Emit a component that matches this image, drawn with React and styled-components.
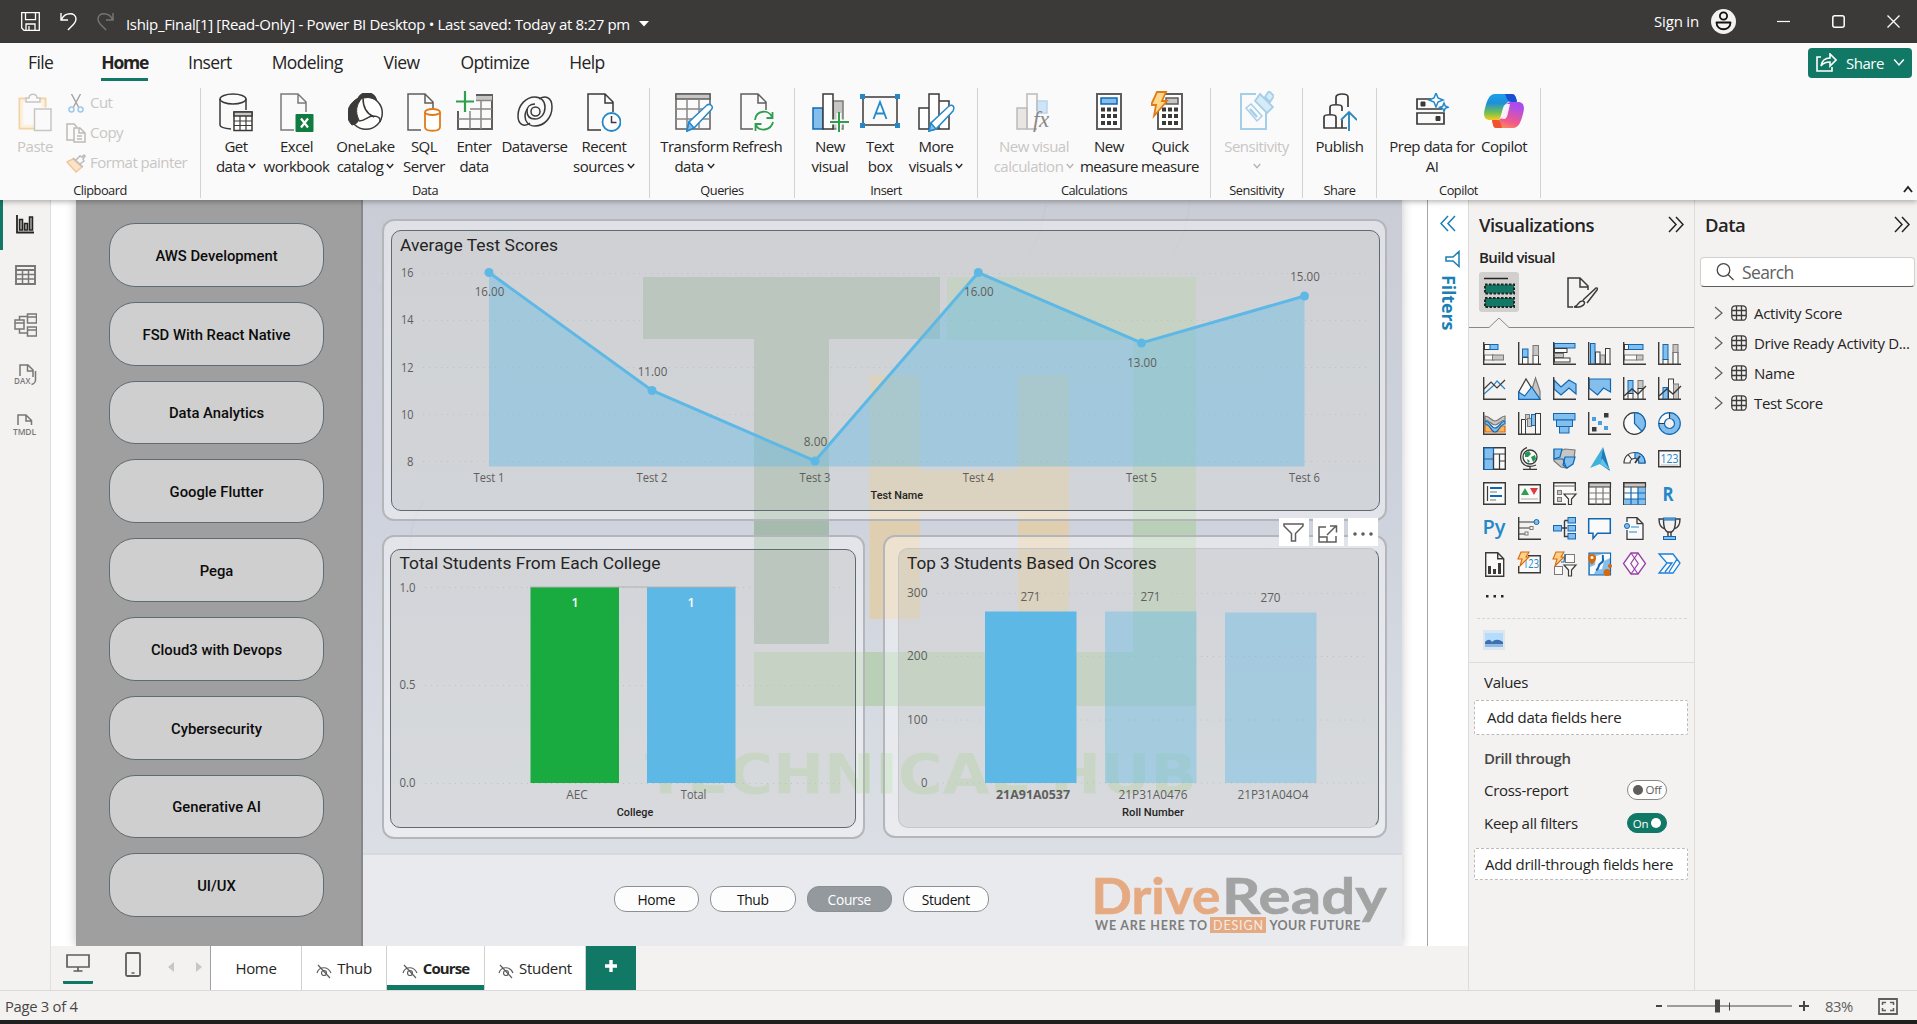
import React from "react";
import styled, { createGlobalStyle, css } from "styled-components";

const UI = '"Open Sans", "Noto Sans", sans-serif';
const DIN = 'Roboto, "Liberation Sans", sans-serif';
const GREEN = "#117865";
const INK = "#252423";
const DK = "#3b3a39";
const BS = "#1068b4";
const BF = "#83beec";
const GS = "#7a7977";
const GF = "#c8c6c4";
const CY = "#2488c8";

const Global = createGlobalStyle`
  *, *::before, *::after { box-sizing: border-box; }
  html, body { margin: 0; padding: 0; }
  body { font-family: ${UI}; color: ${INK}; overflow: hidden; }
  svg { display: block; flex: none; }
`;

const App_ = styled.div`
  width: 1917px; height: 1024px; display: flex; flex-direction: column;
  background: #f3f2f1; font-size: 15px; letter-spacing: -0.033em; overflow: hidden;
`;

/* ---------- title bar ---------- */
const TitleBar = styled.header`
  height: 43px; flex: none; background: ${DK}; color: #fff;
  display: flex; align-items: center; padding: 0 17px 0 21px;
`;
const QuickAccess = styled.div`display: flex; gap: 20px; margin-right: 12px;`;
const DocTitle = styled.div`
  padding-top: 5px; display: flex; align-items: center; gap: 9px; white-space: nowrap;
  letter-spacing: -0.0215em;
`;
const Spacer = styled.div`flex: 1;`;
const SignIn = styled.div`
  display: flex; align-items: center; gap: 12px; margin-right: 41px; letter-spacing: -0.012em;
  span { position: relative; top: -1px; }
`;
const WindowButtons = styled.div`display: flex; align-items: center; gap: 42px;`;

/* ---------- ribbon ---------- */
const Ribbon = styled.section`
  height: 157px; flex: none; background: #fafafa; position: relative; z-index: 2;
  box-shadow: 0 2px 5px rgba(0,0,0,.28); display: flex; flex-direction: column;
`;
const MenuRow = styled.nav`height: 42px; display: flex; align-items: stretch; padding: 0 5px 0 8px;`;
const MenuTab = styled.div`
  padding: 0 20px; margin-right: ${(p) => p.$gap || 0}px; font-size: 17.5px; line-height: 38px;
  font-weight: ${(p) => (p.$active ? 700 : 400)}; position: relative;
  letter-spacing: ${(p) => (p.$active ? "-0.07em" : "-0.035em")};
  ${(p) => p.$active && css`&::after { content: ""; position: absolute; left: 20px; right: 20px; bottom: 4px; height: 3px; background: ${GREEN}; }`}
`;
const ShareButton = styled.button`
  align-self: flex-start; margin-top: 5px; width: 104px; height: 30px; border: 0; border-radius: 4px;
  background: ${GREEN}; color: #fff; font: 15px ${UI}; letter-spacing: -0.033em;
  display: flex; align-items: center; padding: 0 10px 1px 8px; gap: 9px;
`;
const Groups = styled.div`display: flex; padding-top: 3px; height: 113px; position: relative;`;
const Group = styled.div`
  width: ${(p) => p.$w}px; height: 110px; border-right: 1px solid #d4d2d0;
  display: flex; flex-direction: column; padding-left: ${(p) => p.$pl || 0}px;
`;
const GroupItems = styled.div`display: flex; height: 94px;`;
const GroupLabel = styled.div`
  font-size: 12.8px; line-height: 16px; text-align: center; margin-left: -${(p) => p.$pl || 0}px; padding-top: 3px;
`;
const BigButton = styled.div`
  width: ${(p) => p.$w}px; display: flex; flex-direction: column; align-items: center; white-space: nowrap;
  padding-top: 5px; color: ${(p) => (p.$off ? "#c8c6c4" : INK)};
`;
const IconBox = styled.div`height: 43px; display: flex; justify-content: center; align-items: flex-start;`;
const Line = styled.div`line-height: 20px; height: 20px; display: flex; align-items: center; gap: 3px;`;
const ClipList = styled.div`display: flex; flex-direction: column; padding-left: 4px; letter-spacing: -0.036em;`;
const ClipRow = styled.div`height: 30px; display: flex; align-items: center; gap: 4px; color: #c8c6c4; white-space: nowrap;
  svg { width: 20px; } span { position: relative; top: -1px; }`;
const CollapseMark = styled.div`margin-left: auto; align-self: flex-end; padding: 0 4px 5px 0;`;

const Chev = ({ c = INK, w = 8, s = 1.4 }) => (
  <svg width={w} height={w * 0.75} viewBox="0 0 8 6" fill="none" stroke={c} strokeWidth={s}><path d="M.8 1l3.2 3.6L7.2 1" /></svg>
);

function RibbonItem({ w, icon, a, b, caret, off }) {
  return (
    <BigButton $w={w} $off={off}>
      <IconBox>{icon}</IconBox>
      <Line>{a}</Line>
      {(b || caret) && <Line>{b}{caret && <Chev c={off ? "#b5b3b1" : INK} />}</Line>}
    </BigButton>
  );
}

const Ico = ({ w, h, children, ...r }) => (
  <svg width={w} height={h} viewBox={`0 0 ${w} ${h}`} fill="none" stroke={DK} strokeWidth="1.5" {...r}>{children}</svg>
);
const docPath = "M14 37H1V1h17l8 8v10M18 1v9h8";

const ribbonIcons = {
  paste: (
    <Ico w={34} h={39} stroke="#c8c6c4">
      <path d="M8 5.500H1.500v30H16M22 5.500h5.500v9" stroke="#f3d3a6" strokeWidth="2" /><path d="M8 8H4v25h12M22 8h3v6" stroke="#fdf0dc" strokeWidth="2.500" />
      <path d="M8 9V5h3c0-5 8-5 8 0h3v4z" fill="#fafafa" /><path d="M16.500 16h16.500v21.500H16.500z" fill="#fafafa" />
    </Ico>
  ),
  getData: (
    <Ico w={34} h={39}>
      <path d="M1 6v26c0 2 5 3.500 11 4M27 6v11" /><ellipse cx="14" cy="6" rx="13" ry="5" />
      <path d="M15 19h18v18.500H15z" fill="#fff" /><path d="M15 19h18v4H15z" fill={GF} /><path d="M15 28h18M15 32.500h18M21 23v14M27 23v14" strokeWidth="1.2" />
    </Ico>
  ),
  excel: (
    <Ico w={34} h={39} stroke={GS}>
      <path d={docPath} /><rect x="15.500" y="21" width="18" height="18" rx="1" fill="#107c41" stroke="none" />
      <path d="M21 25.500l7 9M28 25.500l-7 9" stroke="#fff" strokeWidth="2.2" />
    </Ico>
  ),
  onelake: (
    <Ico w={36} h={38}>
      <circle cx="18" cy="20" r="16.300" fill="#fff" />
      <path d="M10 6C13-2 25-2 28 6 22 3 16 4 10 6z" fill={DK} />
      <path d="M11 5C-1 10-4 24 4 32c4-1 6-3 7-5-4-8-3-15 3-22z" fill={DK} strokeWidth="1" />
      <path d="M15 5c0 9 4 16 11 19M11 28c6 0 9-5 14-5 5 0 8 2 7 6" />
    </Ico>
  ),
  sql: (
    <Ico w={34} h={39} stroke="#605e5c">
      <path d={docPath} /><g stroke="#e07b1a" strokeWidth="1.800" fill="#fff"><path d="M18 19v15c0 5 15 5 15 0V19" /><ellipse cx="25.500" cy="19" rx="7.500" ry="3" /></g>
    </Ico>
  ),
  enter: (
    <Ico w={37} h={41} stroke="#605e5c" style={{ marginTop: -2 }}>
      <path d="M20 4h16v34H2V20" strokeWidth="2" /><path d="M20 5h16v4H20z" fill={GF} stroke="none" />
      <path d="M20 9.500h16M14 18h22M2 28h34M14 20v18M25 9v29" stroke="#8a8886" /><path d="M9 0v21M0 10.500h18" stroke="#2f9e4f" strokeWidth="2.200" />
    </Ico>
  ),
  dataverse: (
    <Ico w={36} h={37} strokeWidth="1.500">
      <path d="M13 30C7 35 1 31 1 23 1 12 9 4 18 4c6 0 10 4 10 10 0 7-4 12-10 12-5 0-8-3-8-8 0-4 3-7 8-7" />
      <path d="M22 6c6-4 13-2 13 8 0 11-8 19-17 19-7 0-10-5-10-10 0-3 1-5 2-7" />
      <circle cx="18.500" cy="18.500" r="4.500" />
    </Ico>
  ),
  recent: (
    <Ico w={34} h={39}>
      <path d={docPath} /><circle cx="24.500" cy="29" r="9" fill="#fff" stroke="#2488c8" strokeWidth="1.800" /><path d="M24.500 23v6.500h5" />
    </Ico>
  ),
  transform: (
    <Ico w={39} h={39} stroke="#605e5c">
      <path d="M1 1h34v35H1z" fill="#fafafa" /><path d="M1 1h34v5H1z" fill={GF} /><path d="M1 16h34M1 26h34M12 6v30M24 6v30" stroke="#8a8886" />
      <path d="M12 38l2-9 18-17c4-2 7 2 4 5L19 35z" fill="#fff" stroke="#2488c8" /><path d="M12 38l2-9 5 6z" fill={BF} stroke="#2488c8" />
    </Ico>
  ),
  refresh: (
    <Ico w={34} h={39} stroke="#605e5c">
      <path d="M13 36H1V1h17l8 8v8M18 1v9h8" />
      <g stroke="#2f9e4f" strokeWidth="1.800"><path d="M15 27c1-10 14-11 17-3M32.500 19v6h-6M33 29c-2 9-14 10-17 3M15.500 38v-7h6" /></g>
    </Ico>
  ),
  newVisual: (
    <Ico w={37} h={39}>
      <path d="M1 15h10v21H1z" fill={BF} stroke={BS} /><path d="M21 8h10v28H21z" fill={GF} stroke={GS} /><path d="M11 1h10v35H11z" fill="#fff" />
      <path d="M27 20v19M18 29h19" stroke="#fafafa" strokeWidth="5" /><path d="M27 19v20M18 29h19" stroke="#2f9e4f" strokeWidth="2" />
    </Ico>
  ),
  textBox: (
    <Ico w={40} h={36}>
      <path d="M3 4h34v28H3z" /><g fill="#2488c8" stroke="none"><path d="M0 1h5v5H0zM35 1h5v5h-5zM0 30h5v5H0zM35 30h5v5h-5z" /></g>
      <path d="M13.500 26L20 9l6.500 17M15.500 20.500h9" stroke="#2488c8" strokeWidth="1.800" />
    </Ico>
  ),
  moreVisuals: (
    <Ico w={37} h={39}>
      <path d="M1 15h10v21H1zM21 8h10v28H21zM11 1h10v35H11z" fill="#fff" />
      <path d="M11 38l2-8 18-17c4-2 6 1 4 5L18 36z" fill="#fff" stroke="#2488c8" /><path d="M11 38l2-8 5 6z" fill={BF} stroke="#2488c8" />
    </Ico>
  ),
  calc: (
    <Ico w={36} h={39} stroke="#bdbbb9">
      <path d="M1 15h10v21H1z" fill="#e8e6e4" /><path d="M21 8h10v12H21z" fill="#cfe4f6" stroke="#b8d6ee" /><path d="M21 36H11V1h10v17" />
      <text x="17" y="34" fontFamily="Liberation Serif, serif" fontStyle="italic" fontSize="23" fill="#8a8886" stroke="none">fx</text>
    </Ico>
  ),
  measure: (
    <Ico w={26} h={37} stroke="#605e5c">
      <path d="M1 1h24v35H1z" strokeWidth="2" fill="#fff" /><path d="M5 5h16v6H5z" fill={BF} stroke={BS} />
      <path d="M5 16.500h16M5 23h16M5 30h16" stroke={DK} strokeWidth="4" strokeDasharray="4 2" />
    </Ico>
  ),
  quick: (
    <Ico w={32} h={39} stroke="#605e5c" viewBox="0 -2 32 39" style={{ marginTop: -2, marginRight: 6 }}>
      <path d="M7 1h24v35H7z" strokeWidth="2" fill="#fff" /><path d="M15 5h12v6H15z" fill={GF} />
      <path d="M11 16.500h16M11 23h16M11 30h16" stroke={DK} strokeWidth="4" strokeDasharray="4 2" />
      <path d="M6-1h9l-4 9h5L3 23l2-11H0z" fill="#ffd98a" stroke="#e07b1a" strokeWidth="1.800" />
    </Ico>
  ),
  sensitivity: (
    <Ico w={34} h={39} stroke="#a5cfe9" style={{ marginTop: -2 }} viewBox="0 -2 34 39">
      <path d="M16 1H1v35h25V18" strokeWidth="2" /><path d="M6 15l5-4 11 12-5 5z" /><path d="M10 16l7 8" strokeWidth="2.500" />
      <path d="M15 8l5-7 13 13-6 6zM25 4l4-6 5 5-4 6z" fill="#d6ebf7" strokeWidth="1.800" />
    </Ico>
  ),
  publish: (
    <Ico w={34} h={39} strokeWidth="1.7">
      <path d="M1 24c0-3 12-3 12 0v11H1zM7 21v-7c0-3 12-3 12 0v4M13 11V4c0-4 12-4 12 0v10M1 35h23M19 27v8" strokeLinejoin="round" />
      <path d="M26 38V20M18 27l8-8 8 8" stroke="#2c87ba" strokeWidth="1.900" />
    </Ico>
  ),
  prep: (
    <Ico w={33} h={36} strokeWidth="1.700">
      <path d="M15 6H1v10h25M1 20h27v11H1z" /><path d="M5 9h4v4H5zM20 23.500h4v4h-4z" fill={DK} strokeWidth="1" />
      <g stroke="#2488c8" strokeWidth="1.500" fill="#fafafa"><path d="M20 0l2 5 5 2-5 2-2 5-2-5-5-2 5-2zM28 10l1.200 3 3 1.200-3 1.200L28 18.500l-1.200-3-3-1.200 3-1.200z" /></g>
    </Ico>
  ),
  copilot: (
    <svg width="40" height="36" viewBox="0 0 40 36">
      <defs>
        <linearGradient id="cpA" x1="0" y1="0" x2="0" y2="1"><stop offset="0" stopColor="#1aa0ee" /><stop offset=".35" stopColor="#1f8fd8" /><stop offset=".7" stopColor="#6cbf57" /><stop offset="1" stopColor="#f6cb1c" /></linearGradient>
        <linearGradient id="cpB" x1="0" y1="1" x2=".4" y2="0"><stop offset="0" stopColor="#fda04a" /><stop offset=".4" stopColor="#f2598a" /><stop offset="1" stopColor="#a94df0" /></linearGradient>
      </defs>
      <path d="M19 1h9c3 0 4 3 5 7h-6c-5 0-6 5-8 12-2 5-3 7-7 7H6c-6 0-7-5-5-12S5 1 11 1z" fill="url(#cpA)" />
      <path d="M21 1h7c3 0 4 3 5 8h-6c-3 0-4-3-6-8z" fill="#1b4fd0" />
      <path d="M20 35h-8c-3 0-3-4-4-8h5c4 0 5-3 7-10s4-8 8-8h6c6 0 7 5 5 12s-4 14-10 14z" fill="url(#cpB)" />
      <path d="M18 35h-6c-3 0-3-4-4-8h5c3 0 4 3 5 8z" fill="#f0542f" />
      <path d="M23 11c-2 0-3 1-4 4l-3 11c2-1 3 0 4 0 2 0 3-2 4-6l2-9z" fill="#fff" opacity=".9" />
    </svg>
  ),
};

/* ---------- workspace ---------- */
const Workspace = styled.main`flex: 1; min-height: 0; display: flex;`;
const Rail = styled.aside`
  width: 51px; border-right: 1px solid #e1dfdd; display: flex; flex-direction: column;
`;
const RailItem = styled.div`
  height: 50px; display: flex; align-items: center; justify-content: center;
  border-left: 3px solid ${(p) => (p.$active ? GREEN : "transparent")}; padding: 0 3px 1px 0;
`;
const Center = styled.div`width: 1417px; display: flex; flex-direction: column;`;
const Stage = styled.div`height: 746px; display: flex; background: #fff; overflow: hidden;`;
const CanvasArea = styled.div`width: 1377px; padding: 0 25px; border-right: 1px solid #a8a6a4;`;
const FiltersPane = styled.aside`
  width: 40px; display: flex; flex-direction: column; align-items: center; color: #1a7fb5; padding-top: 15px; background: #fff;
`;
const FiltersLabel = styled.div`
  writing-mode: vertical-rl; font-size: 18px; font-weight: 700; letter-spacing: -0.01em; margin: 7px 0 0 2px; line-height: 20px;
`;
const Page = styled.div`
  width: 1326px; height: 746px; display: flex; position: relative; box-shadow: 0 0 10px rgba(0,0,0,.24);
  background: linear-gradient(#cacdd6, #ced2dc 40%, #dbdfe5 88%);
`;
const Sidebar = styled.div`
  width: 287px; background: #9f9fa0; border-right: 2px solid #88888a; padding: 23px 0 0 33px;
  display: flex; flex-direction: column; gap: 15px; position: relative;
`;
const CoursePill = styled.div`
  width: 215px; height: 63.800px; border: 1px solid #5f6c73; border-radius: 26px; background: #cfcfcf;
  display: flex; align-items: center; justify-content: center; padding-top: 2px;
  font: 500 14.8px ${DIN}; letter-spacing: 0; color: #0c0c0c;
`;
const Body = styled.div`flex: 1; display: flex; flex-direction: column; position: relative;`;
const Watermark = styled.svg`position: absolute; left: -2px; top: 0;`;
const Cards = styled.div`
  height: 655px; padding: 19px 15px 0 19px; display: grid; position: relative;
  grid-template-columns: 483px 504px; grid-template-rows: 302px 304px; gap: 14px 18px; border-bottom: 2px solid #d6d9de;
`;
const Card = styled.section`
  grid-column: ${(p) => (p.$wide ? "1 / 3" : "auto")}; border: 2px solid #b5b6ba; border-radius: 12px; margin-bottom: ${(p) => p.$mb || 0}px;
  background: rgba(255,255,255,.4); padding: ${(p) => p.$pad}; position: relative;
`;
const ChartPanel = styled.div`
  height: 100%; border: 1px solid ${(p) => (p.$soft ? "#c4c6c9" : "#5f6b70")}; border-right-color: #5f6b70;
  border-radius: 10px; background: rgba(20,10,0,.075); overflow: hidden;
`;
const VisualHeader = styled.div`position: absolute; top: -19px; right: 7px; display: flex; gap: 4px;`;
const HeaderButton = styled.div`
  width: 30.500px; height: 28px; background: #fff; display: flex; align-items: center; justify-content: center;
`;
const PageFooter = styled.div`
  flex: 1; background: #e9eaee; display: flex; position: relative; padding: 31px 0 0 250.500px; gap: 11px;
`;
const NavPill = styled.div`
  width: 85.500px; height: 26px; border: 1px solid #8b9094; border-radius: 12px; background: ${(p) => (p.$active ? "#94999e" : "#fdfdfd")};
  color: ${(p) => (p.$active ? "#fff" : "#111")}; font-size: 13.800px; line-height: 26px; text-align: center; letter-spacing: -0.025em;
`;
const LogoSlot = styled.div`margin: -14px 0 0 94px;`;

const T = ({ x, y, w, s = 12.5, a = "middle", f = "#605e5c", b, din, children }) => (
  <text x={x} y={y} fontSize={s} textAnchor={a} fill={f} fontWeight={b || 400} fontFamily={din ? DIN : UI} letterSpacing="0"
    textLength={w} lengthAdjust="spacingAndGlyphs">{children}</text>
);
const Grid = ({ ys, x1, x2 }) => ys.map((y) => (
  <line key={y} x1={x1} x2={x2} y1={y} y2={y} stroke="#bfc0c2" strokeWidth="1" strokeDasharray="1 5" />
));

const scores = [
  ["Test 1", 489, 272.5, "16.00", 296.2], ["Test 2", 652, 390.5, "11.00", 376.2], ["Test 3", 815, 461, "8.00", 446],
  ["Test 4", 978.3, 272.5, "16.00", 296.2], ["Test 5", 1141.5, 343, "13.00", 367], ["Test 6", 1304.5, 296, "15.00", 281],
];
function ScoreChart() {
  const line = scores.map((d) => `${d[1]},${d[2]}`).join(" ");
  return (
    <svg width="987" height="279" viewBox="392 231 987 279">
      <Grid ys={[273.5, 320.5, 367.5, 414.5, 461.5]} x1={423} x2={1369} />
      <T x={400} y={251} s={17} w={158} a="start" f={INK} din>Average Test Scores</T>
      {[16, 14, 12, 10, 8].map((v, i) => <T key={v} x={413.5} y={277.2 + i * 47.2} w={v > 9 ? 12.500 : 6.500} a="end">{v}</T>)}
      <polygon points={`489,466.5 ${line} 1304.5,466.5`} fill="#5db8e5" opacity=".4" />
      <polyline points={line} fill="none" stroke="#5db8e5" strokeWidth="3" />
      {scores.map((d) => (
        <g key={d[0]}>
          <circle cx={d[1]} cy={d[2]} r="4.500" fill="#5db8e5" />
          <T x={d[1] + 0.5} y={d[4]} w={d[3].length * 5.9}>{d[3]}</T>
          <T x={d[1]} y={482} w={31}>{d[0]}</T>
        </g>
      ))}
      <T x={896.8} y={498.8} w={52.5} s={11} f={INK} b={500} din>Test Name</T>
    </svg>
  );
}
function CollegeChart() {
  return (
    <svg width="463" height="277" viewBox="391 550 463 277">
      <Grid ys={[587.5, 685.5, 783.5]} x1={425} x2={843} />
      <T x={399.5} y={568.8} s={17} w={261} a="start" f={INK} din>Total Students From Each College</T>
      {["1.0", "0.5", "0.0"].map((v, i) => <T key={v} x={415.5} y={592 + i * 97.4} w={16} a="end">{v}</T>)}
      <rect x="530.500" y="587" width="88.500" height="196" fill="#1aab40" />
      <rect x="647" y="587" width="88.500" height="196" fill="#5db8e5" />
      <path d="M530 587h206" stroke="#b0b2b0" />
      <T x={575} y={607} f="#fff" b={600}>1</T><T x={691} y={607} f="#fff" b={600}>1</T>
      <T x={577} y={799} w={21.5}>AEC</T><T x={693.6} y={799} w={25.5}>Total</T>
      <T x={635} y={816} w={36.5} s={11} f={INK} b={500} din>College</T>
    </svg>
  );
}
const students = [["21A91A0537", 985, 611.5, 271, 74, true], ["21P31A0476", 1105, 611.5, 271, 69], ["21P31A04O4", 1225, 612.5, 270, 71]];
function StudentChart() {
  return (
    <svg width="480" height="277" viewBox="899 549 480 277">
      <Grid ys={[593.5, 656.5, 720, 783]} x1={937} x2={1369} />
      <T x={907} y={568.8} s={17} w={249.5} a="start" f={INK} din>Top 3 Students Based On Scores</T>
      {[300, 200, 100, 0].map((v, i) => <T key={v} x={927.5} y={597 + i * 63.3} w={v ? 20.500 : 6.500} a="end">{v}</T>)}
      {students.map(([n, x, y, v, w, on]) => (
        <g key={n}>
          <rect x={x} y={y} width="91.500" height={783 - y} fill="#5db8e5" opacity={on ? 1 : 0.4} />
          <T x={x + 45.5} y={y - 10.500} w={20}>{v}</T>
          <T x={x + 48} y={799} w={w} b={on ? 700 : 400}>{n}</T>
        </g>
      ))}
      <T x={1153} y={816} w={62} s={11} f={INK} b={500} din>Roll Number</T>
    </svg>
  );
}
function HubMark() {
  return (
    <Watermark width="1040" height="746" viewBox="361 200 1040 746">
      <g stroke="#b9bfcc" fill="none" opacity=".22" strokeWidth="2">
        <path d="M1190 200c-2 20-8 40-16 52M1046 205c-4 20-10 40-18 52M410 550c0-22 5-34 14-48M380 290c12-30 4-60 2-70" />
      </g>
      <path d="M643 277h297v62H829v305h-75V339H643z" fill="#a5bbae" />
      <path d="M947 277h249v429H754v-54h379V340H947z" fill="#b9d0b7" />
      <path d="M869.500 375H920v96h98v-96h51v244h-51V513h-98v106h-50.500z" fill="#dfcfb0" />
      <text x="645" y="793" fontFamily="DejaVu Sans, sans-serif" fontWeight="700" fontSize="55" fill="#c0d7bb" letterSpacing="0" textLength="552" lengthAdjust="spacingAndGlyphs">TECHNICAL HUB</text>
    </Watermark>
  );
}
function DriveReady() {
  return (
    <svg width="295" height="64" viewBox="1094 872 295 64" fontFamily="Lato, sans-serif" letterSpacing="0" style={{ overflow: "visible" }}>
      <g fontWeight="700" fontSize="50.500" strokeWidth=".6">
        <text x="1091.500" y="914" fill="#e6aa82" stroke="#e6aa82" textLength="129" lengthAdjust="spacingAndGlyphs">Drive</text>
        <text x="1222" y="914" fill="#a3a3a3" stroke="#a3a3a3" textLength="165" lengthAdjust="spacingAndGlyphs">Ready</text>
      </g>
      <rect x="1210" y="917" width="56" height="16" fill="#e6aa82" />
      <g fontWeight="700" fontSize="12.500" fill="#7d7d7d">
        <text x="1095" y="929.500" textLength="112">WE ARE HERE TO</text>
        <text x="1213" y="929.500" fill="#f4ece6" fontWeight="400" textLength="50">DESIGN</text>
        <text x="1269.500" y="929.500" textLength="91">YOUR FUTURE</text>
      </g>
    </svg>
  );
}

/* ---------- page tabs ---------- */
const TabBar = styled.div`flex: 1; display: flex; align-items: stretch;`;
const ViewIcons = styled.div`width: 160px; display: flex; position: relative; padding-left: 12px; border-right: 1px solid #a19f9d;`;
const DesktopView = styled.div`
  width: 30px; height: 38px; border-bottom: 3px solid ${GREEN}; display: flex; justify-content: center; padding-top: 8px; border-radius: 1px;
`;
const PhoneView = styled.div`padding: 6px 0 0 32px;`;
const Arrows = styled.div`display: flex; gap: 22px; padding: 16px 0 0 27px;`;
const PageTab = styled.div`
  width: ${(p) => p.$w}px; background: #fff; border-right: 1px solid #d2d0ce; display: flex; align-items: center; justify-content: center;
  gap: 5px; padding-bottom: 1px; letter-spacing: ${(p) => (p.$active ? "-0.06em" : "-0.02em")}; font-weight: ${(p) => (p.$active ? 700 : 400)};
  box-shadow: ${(p) => (p.$active ? `inset 0 -5px ${GREEN}` : "none")};
`;
const AddTab = styled.div`width: 50px; background: ${GREEN}; display: flex; align-items: center; justify-content: center; padding-bottom: 4px;`;
const HiddenIcon = () => (
  <Ico w={16} h={15} stroke="#605e5c" strokeWidth="1.2" style={{ marginTop: 8 }}>
    <path d="M1 9c2-7 11-7 14 0M2 1l12 13" /><circle cx="8" cy="9" r="2.500" />
  </Ico>
);

/* ---------- panes ---------- */
const Pane = styled.aside`
  width: ${(p) => p.$w}px; border-left: 1px solid #dedcda; display: flex; flex-direction: column; letter-spacing: -0.02em;
`;
const PaneHead = styled.div`
  height: 47px; flex: none; display: flex; align-items: center; justify-content: space-between; padding: 2px ${(p) => p.$pr}px 0 ${(p) => p.$pl}px;
  font-size: 18.500px; font-weight: 600; letter-spacing: -0.03em;
`;
const SubHead = styled.div`height: 25px; line-height: 20px; padding-left: 10px; font-weight: 600; letter-spacing: -0.04em;`;
const ModeRow = styled.div`display: flex; gap: 43px; padding-left: 10px; height: 40px;`;
const ModeTile = styled.div`
  width: 40px; height: 40px; border-radius: 3px; background: ${(p) => (p.$on ? "#d2d0ce" : "transparent")};
  display: flex; align-items: center; justify-content: center;
`;
const VizGrid = styled.div`
  display: grid; grid-template-columns: repeat(6, 23px); grid-auto-rows: 23px; gap: 12px; padding: 14px 0 0 14px; height: 259px;
`;
const MoreDots = styled.div`height: 17px; padding: 8px 0 0 17px;`;
const DashRule = styled.div`margin: 14px 7px 0 8px; border-top: 1px dashed #d8d6d4; height: 44px; padding: 11px 0 0 6px;`;
const Values = styled.div`border-top: 1px solid #dedcda; padding: 0 6px 0 5px; display: flex; flex-direction: column;`;
const FieldLabel = styled.div`height: ${(p) => p.$h}px; display: flex; align-items: center; padding: 0 20px 0 10px; justify-content: space-between; ${(p) => p.$b && "font-weight:600;color:#484644;letter-spacing:-.03em;"}`;
const DropBox = styled.div`
  height: ${(p) => p.$h}px; background: #fff; border: 1px dashed #bdbbb9; border-radius: 2px; display: flex; align-items: center;
  padding: 0 0 1px ${(p) => p.$pl}px; white-space: nowrap;
`;
const Toggle = styled.div`
  width: 40px; height: 20px; border-radius: 10px; border: 1px solid ${(p) => (p.$on ? GREEN : "#8a8886")}; background: ${(p) => (p.$on ? GREEN : "#fff")};
  color: ${(p) => (p.$on ? "#fff" : "#605e5c")}; font-size: 11.500px; display: flex; align-items: center; justify-content: center; gap: 3px;
  flex-direction: ${(p) => (p.$on ? "row" : "row-reverse")}; margin-right: 1px;
  &::after { content: ""; width: 10px; height: 10px; border-radius: 50%; background: ${(p) => (p.$on ? "#fff" : "#605e5c")}; }
`;
const SearchBox = styled.div`
  margin: 10px 2px 0 5px; height: 30px; background: #fff; border: 1px solid #d2d0ce; border-bottom-color: #605e5c; border-radius: 4px;
  display: flex; align-items: center; gap: 8px; padding-left: 15px; font-size: 17.500px; color: #616161; letter-spacing: -0.035em;
  span { line-height: 28px; }
`;
const Tree = styled.div`padding: 11px 0 0 19px;`;
const TreeRow = styled.div`height: 30px; display: flex; align-items: center; font-size: 15px; letter-spacing: -0.022em; white-space: nowrap; gap: 7px;`;
const DblChev = ({ c = INK, left }) => (
  <svg width="16" height="17" viewBox="0 0 16 17" fill="none" stroke={c} strokeWidth="1.500">
    <path d={left ? "M8 1L1 8.500 8 16M15 1L8 8.500 15 16" : "M1 1l7 7.500L1 16M8 1l7 7.500L8 16"} />
  </svg>
);

/* visual gallery glyphs on a 23px box */
const R = (x, y, w, h, k) => {
  const c = { b: [BF, BS], g: [GF, GS], w: ["#fafafa", DK], l: ["#fafafa", GS], o: ["#f9b36b", "#d66a0b"] }[k];
  return <rect key={`${x}-${y}-${k}`} x={x + 0.5} y={y + 0.5} width={w} height={h} fill={c[0]} stroke={c[1]} />;
};
const axis = <path key="ax" d="M.7 0v22.300H23" fill="none" stroke={DK} strokeWidth="1.400" />;
const P = (d, s = DK, f = "none", w = 1.2) => <path key={d} d={d} stroke={s} fill={f} strokeWidth={w} />;
const frame = P("M.7.700h21.600v21.600H.7z", DK, "#fafafa", 1.4);
const txt = (s, x, y, size, b = 400, w) => (
  <text key={s} x={x} y={y} fontFamily={UI} fontSize={size} fontWeight={b} fill={CY} stroke="none" letterSpacing="0" textLength={w} lengthAdjust="spacingAndGlyphs">{s}</text>
);
const bolt = P("M3 0h8L8 5h3L2 14l2-7H0z", "#d66a0b", "#ffd08a", 1.1);
const filt = P("M11 12h12l-4.500 5v5.500h-3V17z", DK, "#fafafa", 1.2);

const gallery = [
  [R(1, 2, 6, 5, "w"), R(6.5, 2, 8, 5, "b"), R(1, 12.5, 9, 5, "l"), R(9, 12.5, 11, 5, "g"), axis],
  [R(4, 15, 5.5, 7, "w"), R(4, 6.5, 5.5, 8, "b"), R(14.5, 13, 5.5, 9, "w"), R(14.5, 3, 5.5, 10, "g"), axis],
  [R(1, 1, 20.5, 4.5, "b"), R(1, 6, 12.5, 4, "w"), R(1, 11, 9, 4, "g"), R(1, 15.5, 15.5, 4, "w"), axis],
  [R(2, 1, 4.5, 21, "b"), R(7, 9.5, 4.5, 12, "w"), R(12, 12.5, 4.5, 9.5, "g"), R(17, 6, 4.5, 16, "w"), axis],
  [R(1, 2, 4, 5, "w"), R(5, 2, 14.5, 5, "b"), R(1, 12.5, 12, 5, "l"), R(13, 12.5, 6.5, 5, "g"), axis],
  [R(4.5, 17, 5, 5, "w"), R(4.5, 2, 5, 15, "b"), R(14.5, 10, 5, 12, "w"), R(14.5, 2, 5, 8, "g"), axis],
  [P("M1 17l9-8 4-5 8 8", CY), P("M1 12l7-7 6 6 8-8", DK), axis],
  [P("M11 22l6.500-21L22 14v8z", GS, GF), P("M.7 22V15L8 2l8 13v7z", DK, "#fafafa"), P("M.7 22.300V15l6 4 7-9 8.500 12.300z", BS, BF)],
  [P("M1 3l7 7 8-7 7 4v10l-7-6-8 7-7-6z", BS, BF), axis],
  [P("M1 2h21.500v13l-7-4-6 7L1 11z", BS, BF), axis],
  [R(4.5, 3, 5, 13, "b"), R(4.5, 16, 5, 6, "w"), R(14.5, 3, 5, 8, "g"), R(14.5, 11, 5, 11, "w"), P("M1 19l8-7 6 5 8-8", DK, "none", 1.4), axis],
  [R(4.5, 10, 5, 12, "b"), R(10, 1.5, 5, 20.500, "w"), R(15, 6.5, 5, 15.500, "g"), P("M1 19l8-7 6 5 8-8", DK, "none", 1.4), axis],
  [P("M2 13h5l5 5 4-4h6v6H2z", "#d66a0b", "#ffb45c"), P("M2 4c5 0 6 5 10 5s6-5 10-5v4c-5 0-6 5-10 5S7 8 2 8z", GS, GF), P("M2 9c5 0 6 7 10 7s6-7 10-7v3c-5 0-6 8-10 8S7 12 2 12z", BS, BF), axis],
  [R(3, 7, 4, 15, "w"), R(7, 2, 4, 5, "g"), R(9, 6, 4, 8, "g"), R(13, 2, 4, 11, "b"), R(17, 1, 5, 21, "w"), axis],
  [R(0, 1, 21.500, 6.500, "b"), R(3, 7.500, 16, 6.500, "b"), R(6, 14, 9.500, 6.500, "b")],
  [axis, <g key="s" stroke="none"><path d="M16 1h4.500v4.500H16zM4 15h4.500v4.500H4z" fill={DK} /><path d="M4 5h4v4H4zM10 9h4v4h-4zM16 14h4v4h-4z" fill="#4a9fe0" /></g>],
  [<circle key="c" cx="11.500" cy="11.500" r="10.800" fill="#fafafa" stroke={DK} strokeWidth="1.300" />, P("M11.500.700a10.800 10.800 0 0 1 7.500 18.600l-7.500-7.800z", BS, BF)],
  [<circle key="c" cx="11.500" cy="11.500" r="8" fill="none" stroke={BF} strokeWidth="5.500" />, P("M11.500 3.500a8 8 0 0 0-8 8", "#fafafa", "none", 5.5), <g key="g" fill="none" stroke={BS} strokeWidth="1.200"><circle cx="11.500" cy="11.500" r="10.800" /><circle cx="11.500" cy="11.500" r="5" /></g>, P("M.7 11.500h5.800M11.500.700v5.500", DK)],
  [frame, P("M1 1h9.500v21.500H1zM1 12h9.500", BS, BF), P("M10.500 7h12M10.500 7v15.500M16.500 7v15.500M16.500 14h6", DK)],
  [<circle key="c" cx="12" cy="10" r="7" fill="#fafafa" stroke={DK} strokeWidth="1.300" />, P("M7 6l4-2 2 3-3 3H7zM13 10l4-2 1 4-3 3zM9 12l3 2-2 2z", "none", "#219653"), P("M9 .600C1 3 0 16 9 19c4 1 7 0 9-1M12 19v3M5 22.300h14", DK, "none", 1.3)],
  [P("M1 3l6 1 5-2 10 1-1 9-7 9-6-1-7-6z", GS, GF), P("M1 2l8 0-2 8-6 2z", BS, BF), P("M12 10h10l-2 7-6 4-4-3z", BS, BF), P("M1 12h9l3 8", BS)],
  [P("M15 0L2 21l10-4z", "none", "#3fb2dc"), P("M15 0l-3 17 10 7z", "none", "#2079bb"), P("M12 17l2-6 8 12z", "none", "#58c7ea")],
  [P("M1 16C1 2 22 2 22 16h-6c0-6-9-6-9 0z", DK, "#fafafa"), P("M12 5.500c6 0 10 4 10 10.500h-6c0-3-2-5-4-5z", BS, BF), P("M5 7.500l4 5", DK), P("M12 16l5-7", DK, "none", 1.8)],
  [P("M.7 3.700h21.600v16H.7z", DK, "#fafafa", 1.4), txt("123", 2.5, 15.500, 13, 400, 18), P("M3 18h17", GF)],
  [frame, P("M4.500 4v15", DK), P("M7 6h12M7 14h12", BS, "none", 1.8), P("M7 10h7M7 18h6", GS)],
  [P("M.7 2.700h21.600v18H.7z", DK, "#fafafa", 1.4), P("M3 13l4-7 4 7z", "none", "#2f9e4f"), P("M12 6h8l-4 7z", "none", "#e03a3a"), P("M3 17h17", GF, "none", 1.5)],
  [P("M13 22.300H.7V.700h21.600V9", DK, "#fafafa", 1.4), P("M1 4h21.500", GS), R(4, 8, 4, 4, "g"), R(4, 15, 4, 4, "g"), filt],
  [frame, P("M1 1h21.500v4H1z", DK, GF), P("M1 11h21.500M1 17h21.500M8 5v17.500M15 5v17.500", GS)],
  [frame, P("M15 5h7.500v17.500H1V17h14z", "none", BF), P("M1 1h21.500v4H1z", DK, GF), P("M1 11h21.500M1 17h21.500M8 5v17.500M15 5v17.500", BS)],
  [txt("R", 4.5, 18.500, 20, 700, 11)],
  [txt("Py", -0.5, 17, 20, 600, 23)],
  [P("M1 5h16M1 11h12M1 17h7", DK), <g key="k"><circle cx="18.500" cy="5" r="2.500" fill={BF} stroke={BS} /><rect x="12" y="9.500" width="3" height="3" fill="#fff" stroke={GS} /><rect x="7" y="15" width="3" height="3" fill="#fff" stroke={GS} /></g>, axis],
  [P("M8 11h6M11.500 3.500H15M11.500 3.500v16H15", DK, "none", 1.4), R(0, 8, 8, 5.500, "b"), R(14.500, 0, 7.500, 5.500, "b"), R(14.500, 8, 7.500, 5.500, "b"), R(14.500, 16, 7.500, 5.500, "b")],
  [P("M.7 1.700h21.600v14.600H9.500L5 21.500v-5.200H.7z", BS, "#fafafa", 1.5)],
  [P("M4 5V.700h10l6 6v15.600H4V13M14 .700v6h6", DK, "#fafafa", 1.3), <circle key="c" cx="4" cy="9" r="2.500" fill={BF} stroke={BS} />, P("M8 10h8M6 15h8", CY)],
  [P("M6 2H1c0 6 2 9 6 10M17 2h5c0 6-2 9-6 10M5.500 3c0 8 2 11 4 12h4c2-1 4-4 4-12M10 15v4M13 15v4", DK, "none", 1.4), R(5, 0.5, 12, 2, "b"), R(5, 19, 12, 3, "b")],
  [P("M2.700.700h12l6 6v17.500h-18zM14.700.700v6h6", DK, "#fafafa", 1.4), <path key="b" d="M5 14h3v8H5zM10 17h3v5h-3zM15 11h3v11h-3z" fill={DK} stroke="none" />],
  [P("M10 3.700h12.300v17H.7V14", DK, "#fafafa", 1.4), txt("123", 5, 16, 13, 400, 16), bolt],
  [R(12, 2, 9, 8, "l"), R(1, 14, 8, 8, "l"), P("M12 2l-1 8h-3", BS), bolt, P("M11 13h12l-4.500 5v6h-3v-6z", DK, "#fafafa", 1.2)],
  [P("M1 1h21.500v22H1z", BS, BF), P("M15 2h7v4l-6 3-2 8-6 1-2 4H2v-7l5-2 1-9z", "none", "#fafafa"), P("M15 3c-1 4 2 6-2 8s-1 6-5 7", BS, "none", 2), P("M0 6a4 4 0 0 1 8 0c0 3-3 5-4 7C3 11 0 9 0 6z", "none", "#d66a0b"), <g key="c" fill="#d66a0b" stroke="none"><circle cx="19" cy="20.500" r="3.500" /><circle cx="22" cy="14" r="2" /><circle cx="4" cy="5.500" r="1.500" fill="#fff" /></g>],
  [P("M8 1h7l7.500 10.500L15 22H8L.5 11.500z", "#9b3fa8", "#fafafa", 1.3), P("M11.500 6l3.700 5.500-3.700 5.500-3.700-5.500zM8 1l3.500 5L15 1M8 22l3.500-5 3.500 5", "#9b3fa8", "none", 1.2)],
  [P("M1 2h14l7 9-7 10H1l8-10zM9 11h5L7 20M15 2l4 5-8 13", "#1a80dd", "#fafafa", 1.3)],
];

const railIcons = [
  <Ico w={18} h={19} stroke="#252423"><path d="M1 0v17.500h17" strokeWidth="1.800" /><path d="M3.500 4.500h3V15h-3zM8.500 8.500h3V15h-3zM13.500 2h3v13h-3z" fill="#a8a6a4" /></Ico>,
  <Ico w={21} h={20} stroke="#797775"><path d="M1 1h19v18H1zM1 5h19" strokeWidth="1.900" /><path d="M1 9.500h19M1 14h19M7.500 5v14M13.500 5v14" /></Ico>,
  <Ico w={23} h={24} stroke="#797775"><path d="M1 7h9v9H1zM1 10h9M13.500 1h9v9h-9zM13.500 4h9M13.500 14h9v9h-9zM13.500 17h9M5.500 7V3.500h8M5.500 16v4h8" /></Ico>,
  <Ico w={23} h={22} stroke="#797775"><path d="M6 12V1h8l5 5v7M13.500 1v6H19M21.500 7v9c0 2-2 4-4 4.500" /><text x="0" y="20" fontSize="8" fontFamily="Open Sans, sans-serif" fontWeight="600" fill="#797775" stroke="none" letterSpacing="0" textLength="16.500">DAX</text></Ico>,
  <Ico w={24} h={22} stroke="#797775"><path d="M5 11V1h8l5.500 5.500V11M13 1v6h5.500" /><text x="0" y="20.500" fontSize="8.500" fontFamily="Open Sans, sans-serif" fontWeight="600" fill="#797775" stroke="none" letterSpacing="0" textLength="23">TMDL</text></Ico>,
];

/* ---------- status bar ---------- */
const StatusBar = styled.footer`
  height: 34px; flex: none; border-top: 1px solid #dcdad8; border-bottom: 4px solid #201f1f; display: flex; align-items: center;
  padding: 1px 19px 0 5px; font-size: 14.800px; color: #484644; letter-spacing: -0.02em;
`;
const ZoomText = styled.span`width: 34px; margin: 0 19px 0 16px; color: #605e5c; letter-spacing: -0.035em;`;

const courses = ["AWS Development", "FSD With React Native", "Data Analytics", "Google Flutter", "Pega", "Cloud3 with Devops", "Cybersecurity", "Generative AI", "UI/UX"];
const I = ribbonIcons;

export default function App() {
  return (
    <App_>
      <Global />
      <TitleBar>
        <QuickAccess>
          <Ico w={19} h={19} stroke="#fff" strokeWidth="1.3"><path d="M.700.700h17.600v17.600H3L.700 16zM4.500.700v7h10v-7M5 18v-6h9v6M8 14v4" /></Ico>
          <Ico w={17} h={19} stroke="#fff" strokeWidth="1.4"><path d="M1 1v7h7M1.500 7.500C5 0 16 0 16 7c0 5-5 7-8 11" /></Ico>
          <Ico w={17} h={19} stroke="#797775" strokeWidth="1.400"><path d="M16 1v7H9M15.500 7.500C12 0 1 0 1 7c0 5 5 7 8 11" /></Ico>
        </QuickAccess>
        <DocTitle>
          <span>Iship_Final[1] [Read-Only] - Power BI Desktop&nbsp;•&nbsp;Last saved: Today at 8:27 pm</span>
          <svg width="10" height="6"><path d="M0 0h10L5 5.500z" fill="#fff" /></svg>
        </DocTitle>
        <Spacer />
        <SignIn>
          <span>Sign in</span>
          <svg width="25" height="25" viewBox="0 0 25 25"><circle cx="12.500" cy="12.500" r="12.500" fill="#f3f2f1" /><g fill="none" stroke="#111" strokeWidth="1.800"><circle cx="12.500" cy="7" r="3.600" /><path d="M5.500 13.500h14c0 9-14 9-14 0z" strokeLinejoin="round" /></g></svg>
        </SignIn>
        <WindowButtons>
          <Ico w={13} h={13} stroke="#fff"><path d="M0 6.500h13" strokeWidth="1.200" /></Ico>
          <Ico w={13} h={13} stroke="#fff"><rect x=".8" y=".8" width="11.400" height="11.400" rx="2" /></Ico>
          <Ico w={13} h={13} stroke="#fff"><path d="M.5.500l12 12M12.500.500l-12 12" strokeWidth="1.300" /></Ico>
        </WindowButtons>
      </TitleBar>

      <Ribbon>
        <MenuRow>
          <MenuTab $gap={8}>File</MenuTab><MenuTab $active>Home</MenuTab><MenuTab>Insert</MenuTab><MenuTab $gap={1}>Modeling</MenuTab>
          <MenuTab $gap={1}>View</MenuTab><MenuTab>Optimize</MenuTab><MenuTab>Help</MenuTab>
          <Spacer />
          <ShareButton>
            <Ico w={21} h={19} stroke="#fff" strokeWidth="1.600"><path d="M5 4H1v14h15v-4M5 13c1-6 4-8 9-8V1l6 6-6 6V9c-4 0-7 1-9 4z" /></Ico>
            Share
            <Chev c="#fff" w={12} s={1} />
          </ShareButton>
        </MenuRow>
        <Groups>
          <Group $w={201} $pl={8}>
            <GroupItems>
              <RibbonItem w={54} icon={I.paste} a="Paste" off />
              <ClipList>
                <ClipRow><Ico w={17} h={19} stroke="#a8a6a4"><path d="M4 0l7 13M13 0L6 13" /><g stroke="#9cc9e8"><circle cx="4" cy="15.500" r="2.500" /><circle cx="13" cy="15.500" r="2.500" /></g></Ico><span>Cut</span></ClipRow>
                <ClipRow><Ico w={20} h={20} stroke="#bdbbb9"><path d="M8 17H1V1h7l3 3M8 5h6l5 5v9H8zM13 5v5h6M11 13h5M11 16h5" /></Ico><span>Copy</span></ClipRow>
                <ClipRow><Ico w={20} h={19} stroke="#bdbbb9"><path d="M1 8l6-3 9 8-6 5z" fill="#fbe3c8" stroke="#f0c79c" /><path d="M7 4l10 9M10 6l4-4 2 1 2-2 1 1-2 3 1 2-4 3" /></Ico><span>Format painter</span></ClipRow>
              </ClipList>
            </GroupItems>
            <GroupLabel $pl={8}>Clipboard</GroupLabel>
          </Group>
          <Group $w={449} $pl={8}>
            <GroupItems>
              <RibbonItem w={54} icon={I.getData} a="Get" b="data" caret />
              <RibbonItem w={67} icon={I.excel} a="Excel" b="workbook" />
              <RibbonItem w={71} icon={I.onelake} a="OneLake" b="catalog" caret />
              <RibbonItem w={46} icon={I.sql} a="SQL" b="Server" />
              <RibbonItem w={54} icon={I.enter} a="Enter" b="data" />
              <RibbonItem w={67} icon={I.dataverse} a="Dataverse" />
              <RibbonItem w={72} icon={I.recent} a="Recent" b="sources" caret />
            </GroupItems>
            <GroupLabel $pl={8}>Data</GroupLabel>
          </Group>
          <Group $w={145} $pl={7}>
            <GroupItems><RibbonItem w={75} icon={I.transform} a="Transform" b="data" caret /><RibbonItem w={50} icon={I.refresh} a="Refresh" /></GroupItems>
            <GroupLabel $pl={7}>Queries</GroupLabel>
          </Group>
          <Group $w={183} $pl={9}>
            <GroupItems><RibbonItem w={52} icon={I.newVisual} a="New" b="visual" /><RibbonItem w={48} icon={I.textBox} a="Text" b="box" /><RibbonItem w={64} icon={I.moreVisuals} a="More" b="visuals" caret /></GroupItems>
            <GroupLabel $pl={9}>Insert</GroupLabel>
          </Group>
          <Group $w={233} $pl={9}>
            <GroupItems><RibbonItem w={94} icon={I.calc} a="New visual" b="calculation" caret off /><RibbonItem w={56} icon={I.measure} a="New" b="measure" /><RibbonItem w={66} icon={I.quick} a="Quick" b="measure" /></GroupItems>
            <GroupLabel $pl={9}>Calculations</GroupLabel>
          </Group>
          <Group $w={92}><GroupItems><RibbonItem w={91} icon={I.sensitivity} a="Sensitivity" caret off /></GroupItems><GroupLabel>Sensitivity</GroupLabel></Group>
          <Group $w={74}><GroupItems><RibbonItem w={73} icon={I.publish} a="Publish" /></GroupItems><GroupLabel>Share</GroupLabel></Group>
          <Group $w={164} $pl={9}>
            <GroupItems><RibbonItem w={92} icon={I.prep} a="Prep data for" b="AI" /><RibbonItem w={52} icon={I.copilot} a="Copilot" /></GroupItems>
            <GroupLabel $pl={9}>Copilot</GroupLabel>
          </Group>
          <CollapseMark><Ico w={10} h={8} stroke={INK} strokeWidth="1.900"><path d="M1 7l4-5 4 5" /></Ico></CollapseMark>
        </Groups>
      </Ribbon>

      <Workspace>
        <Rail>{railIcons.map((ic, i) => <RailItem key={i} $active={i === 0}>{ic}</RailItem>)}</Rail>
        <Center>
          <Stage>
            <CanvasArea>
              <Page>
                <Sidebar>{courses.map((c) => <CoursePill key={c}>{c}</CoursePill>)}</Sidebar>
                <Body>
                  <HubMark />
                  <Cards>
                    <Card $wide $pad="9px 5px 8px 7px"><ChartPanel><ScoreChart /></ChartPanel></Card>
                    <Card $pad="12px 7px 9px 6px"><ChartPanel><CollegeChart /></ChartPanel></Card>
                    <Card $pad="11px 6px 8px 13px" $mb={1}>
                      <ChartPanel $soft><StudentChart /></ChartPanel>
                      <VisualHeader>
                        <HeaderButton><Ico w={21} h={19} stroke="#605e5c"><path d="M1 1h19v2l-7.500 7.500V18h-4v-7.500L1 3z" /></Ico></HeaderButton>
                        <HeaderButton><Ico w={20} h={18} stroke="#605e5c" style={{ marginTop: 4 }}><path d="M8 2H1v15h17v-6M1 12h8v5M9 10l9-9M12 1h6.500v6.500" /></Ico></HeaderButton>
                        <HeaderButton><svg width="20" height="5" style={{ marginTop: 4 }} fill="#605e5c"><circle cx="2" cy="2" r="1.800" /><circle cx="10" cy="2" r="1.800" /><circle cx="18" cy="2" r="1.800" /></svg></HeaderButton>
                      </VisualHeader>
                    </Card>
                  </Cards>
                  <PageFooter>
                    {["Home", "Thub", "Course", "Student"].map((n) => <NavPill key={n} $active={n === "Course"}>{n}</NavPill>)}
                    <LogoSlot><DriveReady /></LogoSlot>
                  </PageFooter>
                </Body>
              </Page>
            </CanvasArea>
            <FiltersPane>
              <DblChev c="#1a7fb5" left />
              <Ico w={15} h={18} stroke="#1a7fb5" style={{ marginTop: 18, marginLeft: 8 }}><path d="M14 1.500v15L8 11H1V7h7z" /></Ico>
              <FiltersLabel>Filters</FiltersLabel>
            </FiltersPane>
          </Stage>
          <TabBar>
            <ViewIcons>
              <DesktopView><Ico w={24} h={18} stroke="#605e5c"><path d="M1 1h22v12H1zM12 13v4M7.500 17h9" strokeWidth="1.700" /></Ico></DesktopView>
              <PhoneView><Ico w={16} h={25} stroke="#605e5c"><rect x="1" y="1" width="14" height="23" rx="1.500" strokeWidth="1.800" /><path d="M6.500 21h3" /></Ico></PhoneView>
              <Arrows><svg width="6" height="10"><path d="M6 0v10L0 5z" fill="#c8c6c4" /></svg><svg width="6" height="10"><path d="M0 0v10l6-5z" fill="#c8c6c4" /></svg></Arrows>
            </ViewIcons>
            <PageTab $w={91}>Home</PageTab>
            <PageTab $w={85}><HiddenIcon />Thub</PageTab>
            <PageTab $w={98} $active><HiddenIcon />Course</PageTab>
            <PageTab $w={101}><HiddenIcon />Student</PageTab>
            <AddTab><svg width="14" height="14"><path d="M7 1v12M1 7h12" stroke="#fff" strokeWidth="3.400" /></svg></AddTab>
          </TabBar>
        </Center>

        <Pane $w={226}>
          <PaneHead $pl={10} $pr={10}>Visualizations<DblChev /></PaneHead>
          <SubHead>Build visual</SubHead>
          <ModeRow>
            <ModeTile $on><Ico w={31} h={31} stroke={INK}><path d="M0 1.500h24" /><path d="M1 7.500h29v9H1zM1 21h29v9H1z" fill={GREEN} strokeWidth="2" strokeDasharray="2.500 1.500" /></Ico></ModeTile>
            <ModeTile><Ico w={31} h={31} stroke={DK}><path d="M6 30H1V1h12l8 8v4M13 1v9h8M7 30c5-1 4-7 9-6 4 2 0 7-9 6zM16 23L29 11c2 0 2 1 1 2L20 26" /></Ico></ModeTile>
          </ModeRow>
          <svg width="225" height="16" fill="none" stroke="#8a8886"><path d="M0 15.500h20l10-9.500 10 9.500h185" /></svg>
          <VizGrid>{gallery.map((g, i) => <svg key={i} width="24" height="24" viewBox="0 0 24 24" overflow="visible">{g}</svg>)}</VizGrid>
          <MoreDots><svg width="18" height="3" fill={INK}><path d="M0 0h2.500v2.500H0zM7.500 0H10v2.500H7.500zM15 0h2.500v2.500H15z" /></svg></MoreDots>
          <DashRule>
            <svg width="22" height="20"><path d="M0 0h22v20H0z" fill="#dce6ef" /><path d="M2 3h18v14H2z" fill="#b5dcfb" /><path d="M2 12c3-3 5-3 7 0 3-3 7-3 11 0v2c-6 3-12 3-18 0z" fill="#3e6fae" /><path d="M2 14h18v3H2z" fill="#8fb8e6" /></svg>
          </DashRule>
          <Values>
            <FieldLabel $h={37}>Values</FieldLabel>
            <DropBox $h={35} $pl={12}>Add data fields here</DropBox>
            <FieldLabel $h={46} $b>Drill through</FieldLabel>
            <FieldLabel $h={17}>Cross-report<Toggle>Off</Toggle></FieldLabel>
            <FieldLabel $h={50}>Keep all filters<Toggle $on>On</Toggle></FieldLabel>
            <DropBox $h={32} $pl={10}>Add drill-through fields here</DropBox>
          </Values>
        </Pane>

        <Pane $w={223}>
          <PaneHead $pl={10} $pr={7}>Data<DblChev /></PaneHead>
          <SearchBox><Ico w={18} h={18} stroke="#484644" strokeWidth="1.300"><circle cx="7.500" cy="7" r="6.300" /><path d="M12 11.500l5.500 5.500" /></Ico><span>Search</span></SearchBox>
          <Tree>
            {["Activity Score", "Drive Ready Activity D...", "Name", "Test Score"].map((n) => (
              <TreeRow key={n}>
                <Ico w={10} h={14} stroke="#605e5c" strokeWidth="1.200"><path d="M1 1l7 6-7 6" /></Ico>
                <Ico w={16} h={16} strokeWidth="1.300"><rect x=".8" y=".8" width="14.400" height="14.400" rx="3.500" /><path d="M5.500 1v14M10.500 1v14M1 5.500h14M1 10.500h14" /></Ico>
                {n}
              </TreeRow>
            ))}
          </Tree>
        </Pane>
      </Workspace>

      <StatusBar>
        <span>Page 3 of 4</span>
        <Spacer />
        <svg width="154" height="16" viewBox="1655 998 154 16" stroke="#484644" fill="none">
          <path d="M1656 1006h6" strokeWidth="2" /><path d="M1667 1006h125" strokeWidth="1.200" /><path d="M1717.500 999.500v13" strokeWidth="5" /><path d="M1729.500 1002.500v8" /><path d="M1799 1006h10M1804 1001v10" strokeWidth="2" />
        </svg>
        <ZoomText>83%</ZoomText>
        <Ico w={20} h={17} stroke="#605e5c"><path d="M1 1h18v15H1z" strokeWidth="1.800" /><path d="M4.500 7V4.500H8M12 4.500h3.500V7M15.500 10v2.500H12M8 12.500H4.500V10" /></Ico>
      </StatusBar>
    </App_>
  );
}
